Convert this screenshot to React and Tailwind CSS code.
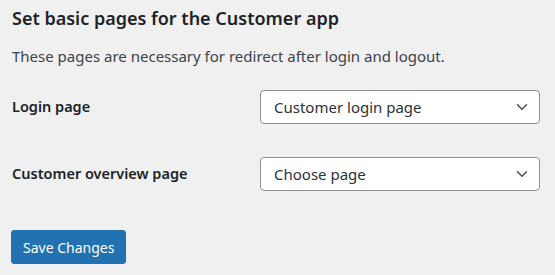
import React, { useState } from 'react';

const Chevron = () => (
  <svg width="12" height="8" viewBox="0 0 12 8" fill="none" className="pointer-events-none">
    <path d="M1.5 1.8 L6 6.2 L10.5 1.8" stroke="#50575e" strokeWidth="1.6" strokeLinecap="round" strokeLinejoin="round" />
  </svg>
);

const PageSelect = ({ value, onChange, options }) => (
  <div className="relative w-[280px]">
    <select
      value={value}
      onChange={(e) => onChange(e.target.value)}
      className="appearance-none w-full h-[34px] bg-white border border-[#8c8f94] rounded-[4px] pl-[13px] pr-8 text-[15px] text-[#2c3338] outline-none"
    >
      {options.map((o) => (
        <option key={o} value={o}>{o}</option>
      ))}
    </select>
    <span className="absolute right-[12px] top-[13px]">
      <Chevron />
    </span>
  </div>
);

const App = () => {
  const [login, setLogin] = useState('Customer login page');
  const [overview, setOverview] = useState('Choose page');
  const options = ['Choose page', 'Customer login page', 'Customer overview page'];

  return (
    <div className="min-h-[275px] bg-[#f0f0f1] px-3 pt-[5px] font-['Noto_Sans',sans-serif] text-[#3c434a]">
      <h2 className="text-[18px] font-semibold text-[#1d2327] leading-[26px]">
        Set basic pages for the Customer app
      </h2>
      <p className="mt-[15px] text-[15px] leading-[20px]">
        These pages are necessary for redirect after login and logout.
      </p>

      <div className="mt-[24px] flex flex-col gap-[33px]">
        <div className="flex items-center">
          <label className="w-[248px] text-[14.5px] font-semibold text-[#1d2327]">Login page</label>
          <PageSelect value={login} onChange={setLogin} options={options} />
        </div>
        <div className="flex items-center">
          <label className="w-[248px] text-[14.5px] font-semibold text-[#1d2327]">Customer overview page</label>
          <PageSelect value={overview} onChange={setOverview} options={options} />
        </div>
      </div>

      <button className="mt-[39px] -ml-px h-[34px] px-[11px] bg-[#2271b1] text-white text-[14px] rounded-[3px] border border-[#2271b1]">
        Save Changes
      </button>
    </div>
  );
};

export default App;
